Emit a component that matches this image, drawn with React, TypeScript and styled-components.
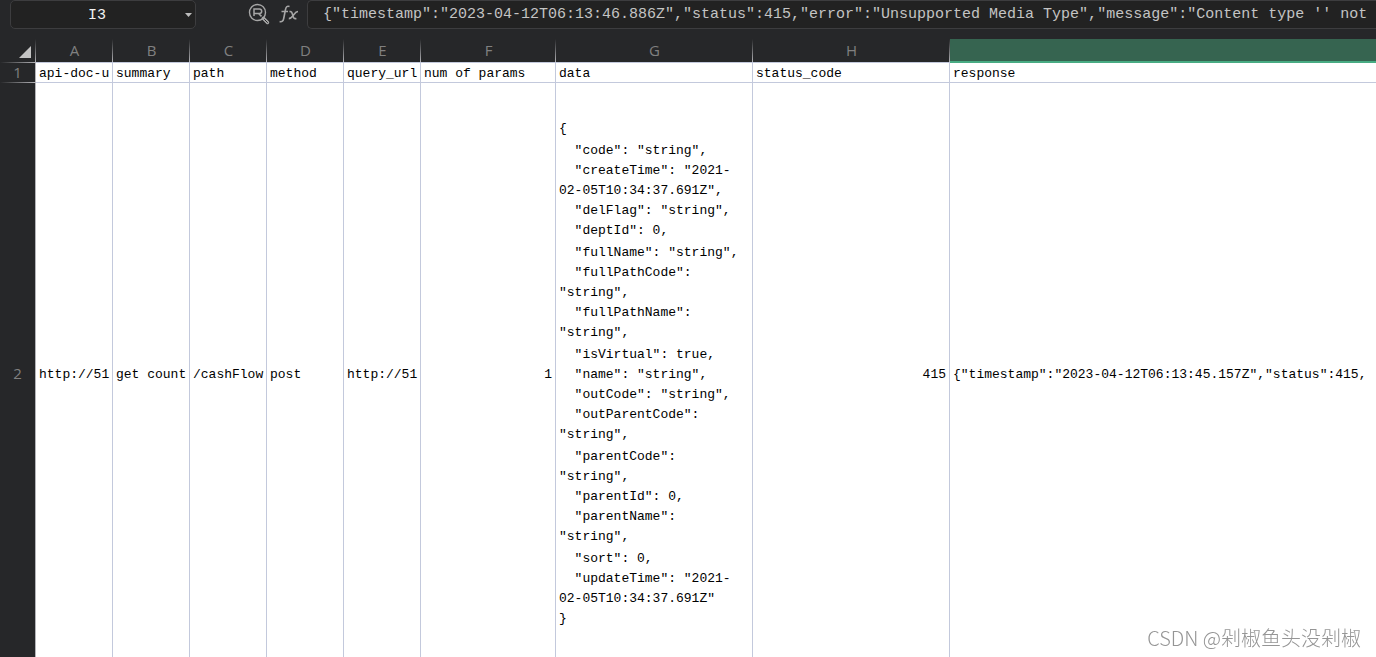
import React from "react";
import styled, { createGlobalStyle } from "styled-components";

const GlobalStyle = createGlobalStyle`
  *, *::before, *::after { box-sizing: border-box; }
  body {
    margin: 0;
    height: 100vh;
    overflow: hidden;
    background: #ffffff;
  }
`;

const mono = `"Liberation Mono", "Noto Sans CJK SC", monospace`;
const sans = `"Open Sans", "Noto Sans CJK SC", sans-serif`;
const gridLine = "#c3c9dc";

const Page = styled.div`
  display: flex;
  flex-direction: column;
  height: 100vh;
  overflow: hidden;
`;

const FormulaRow = styled.header`
  flex: none;
  display: flex;
  align-items: flex-start;
  height: 39px;
  padding-left: 10px;
  background: #262729;
`;

const NameBox = styled.div`
  display: flex;
  align-items: center;
  width: 186px;
  height: 29px;
  border: 1px solid #3d3d3f;
  border-radius: 5px;
  background: #222222;
`;

const NameInput = styled.input`
  flex: 1;
  min-width: 0;
  height: 27px;
  padding: 2px 0 0 2px;
  border: 0;
  outline: 0;
  background: transparent;
  color: #f2f2f2;
  font: 15px/24px ${mono};
  text-align: center;
`;

const PlainButton = styled.button`
  display: flex;
  align-items: center;
  justify-content: center;
  padding: 0;
  border: 0;
  background: transparent;
  color: #a6a6a6;
`;

const DropButton = styled(PlainButton)`
  width: 14px;
  height: 27px;
  color: #bdbdbd;
`;

const Tools = styled.div`
  display: flex;
  align-items: center;
  justify-content: flex-end;
  gap: 9px;
  width: 111px;
  height: 28px;
  padding-right: 8px;
`;

const FormulaInput = styled.input`
  flex: 1;
  min-width: 0;
  height: 29px;
  padding: 0 0 0 15px;
  border: 1px solid #3d3d3f;
  border-right: 0;
  border-radius: 5px 0 0 5px;
  outline: 0;
  background: #222222;
  color: #c4c4c4;
  font: 15px/24px ${mono};
`;

const Sheet = styled.table`
  flex: none;
  width: 100%;
  table-layout: fixed;
  border-collapse: separate;
  border-spacing: 0;
  background: #ffffff;
`;

const Col = styled.col<{ $w?: number }>`
  width: ${(p) => (p.$w ? `${p.$w}px` : "auto")};
`;

const Corner = styled.td`
  height: 24px;
  padding: 2px 5px 0 0;
  background:
    linear-gradient(to right, #262729, #b4b4b8) bottom / 100% 1px no-repeat,
    linear-gradient(to bottom, #262729, #b4b4b8) right / 1px 100% no-repeat,
    #262729;
`;

const CornerIcon = styled.svg`
  display: block;
  margin-left: auto;
`;

const ColHead = styled.th<{ $active?: boolean }>`
  height: 24px;
  padding: 0 0 2px;
  border-bottom: ${(p) => (p.$active ? "2px solid #48ab83" : "1px solid #c3c9dc")};
  background: ${(p) =>
    p.$active
      ? "#366450"
      : "linear-gradient(to bottom, #262729, #b4b4b8) right / 1px 100% no-repeat, #262729"};
  color: #808080;
  font: 400 15px/20px ${sans};
  text-align: center;
`;

const RowHead = styled.th`
  padding: 0 0 2px;
  border-right: 1px solid #b4b4b8;
  background: linear-gradient(to right, #262729, #b4b4b8) bottom / 100% 1px no-repeat, #262729;
  color: #808080;
  font: 400 15px/17px ${sans};
  text-align: center;
  vertical-align: middle;
`;

const Cell = styled.td<{ $right?: boolean }>`
  padding: 2px 3px 0;
  border-right: 1px solid ${gridLine};
  border-bottom: 1px solid ${gridLine};
  overflow: hidden;
  color: #000000;
  font: 13px/17px ${mono};
  text-align: ${(p) => (p.$right ? "right" : "left")};
  vertical-align: middle;
  white-space: pre;
  &:last-child {
    border-right: 0;
  }
`;

const Json = styled.div`
  display: flex;
  flex-direction: column;
  gap: 2px;
  padding: 34px 0 35px;
  line-height: 20px;
`;

const Watermark = styled.div`
  position: fixed;
  right: 15px;
  bottom: 5px;
  color: #959595;
  font: 300 20px/28px "Noto Sans CJK SC", sans-serif;
`;

const columns = [
  { letter: "A", title: "api-doc-u", width: 77 },
  { letter: "B", title: "summary", width: 77 },
  { letter: "C", title: "path", width: 77 },
  { letter: "D", title: "method", width: 77 },
  { letter: "E", title: "query_url", width: 77 },
  { letter: "F", title: "num of params", width: 135 },
  { letter: "G", title: "data", width: 197 },
  { letter: "H", title: "status_code", width: 197 },
  { letter: "", title: "response", width: undefined },
];

const jsonBlocks = [
  `{`,
  `  "code": "string",
  "createTime": "2021-
02-05T10:34:37.691Z",
  "delFlag": "string",
  "deptId": 0,`,
  `  "fullName": "string",
  "fullPathCode":
"string",
  "fullPathName":
"string",`,
  `  "isVirtual": true,
  "name": "string",
  "outCode": "string",
  "outParentCode":
"string",`,
  `  "parentCode":
"string",
  "parentId": 0,
  "parentName":
"string",`,
  `  "sort": 0,
  "updateTime": "2021-
02-05T10:34:37.691Z"
}`,
];

const formula =
  '{"timestamp":"2023-04-12T06:13:46.886Z","status":415,"error":"Unsupported Media Type","message":"Content type \'\' not';

export default function App() {
  return (
    <Page>
      <GlobalStyle />
      <FormulaRow>
        <NameBox>
          <NameInput aria-label="Name box" defaultValue="I3" />
          <DropButton type="button" aria-label="Choose cell">
            <svg width="7" height="4" viewBox="0 0 7 4" fill="currentColor">
              <path d="M0 0h7L3.500 4z" />
            </svg>
          </DropButton>
        </NameBox>
        <Tools>
          <PlainButton type="button" aria-label="Find">
            <svg width="22" height="22" viewBox="0 0 22 22" fill="none" stroke="currentColor">
              <circle cx="9.500" cy="9.500" r="8" strokeWidth="1.400" />
              <path d="M6 13V6h5.500a2.200 2.200 0 0 1 0 4.400H6M10.500 10.400l3 3" strokeWidth="1.500" />
              <path d="M15.300 15.300l4.200 4.200" strokeWidth="3.400" strokeLinecap="round" />
              <path d="M16.500 16.500l3 3" stroke="#262729" strokeWidth="1" strokeLinecap="round" />
            </svg>
          </PlainButton>
          <PlainButton type="button" aria-label="Insert function">
            <svg width="20" height="18" viewBox="0 0 20 18" fill="none" stroke="currentColor" strokeWidth="1.600">
              <path d="M10.500 1.600C8 .6 7 2 6.500 4.500L4.700 13.500C4.200 16 3 17.200.6 16.500M2.500 6.500h6.500" />
              <path d="M10.500 6.600c2-.5 2.600 1 3.200 3.400s1.300 4.200 3.700 3.500M19 6.500c-2 0-3 1.500-4.500 3.500s-2.500 3.600-4.700 3.600" />
            </svg>
          </PlainButton>
        </Tools>
        <FormulaInput aria-label="Formula" defaultValue={formula} />
      </FormulaRow>

      <Sheet>
        <colgroup>
          <Col $w={36} />
          {columns.map((c) => (
            <Col key={c.title} $w={c.width} />
          ))}
        </colgroup>
        <thead>
          <tr>
            <Corner>
              <CornerIcon width="12" height="12" viewBox="0 0 12 12" fill="#c4c4c4">
                <path d="M12 0v12H0z" />
              </CornerIcon>
            </Corner>
            {columns.map((c) => (
              <ColHead key={c.title} scope="col" $active={!c.letter}>
                {c.letter}
              </ColHead>
            ))}
          </tr>
        </thead>
        <tbody>
          <tr>
            <RowHead scope="row">1</RowHead>
            {columns.map((c) => (
              <Cell key={c.title}>{c.title}</Cell>
            ))}
          </tr>
          <tr>
            <RowHead scope="row">2</RowHead>
            <Cell>http://51</Cell>
            <Cell>get count</Cell>
            <Cell>/cashFlow</Cell>
            <Cell>post</Cell>
            <Cell>http://51</Cell>
            <Cell $right>1</Cell>
            <Cell>
              <Json>
                {jsonBlocks.map((block) => (
                  <div key={block}>{block}</div>
                ))}
              </Json>
            </Cell>
            <Cell $right>415</Cell>
            <Cell>{'{"timestamp":"2023-04-12T06:13:45.157Z","status":415,'}</Cell>
          </tr>
        </tbody>
      </Sheet>
      <Watermark>CSDN @剁椒鱼头没剁椒</Watermark>
    </Page>
  );
}
